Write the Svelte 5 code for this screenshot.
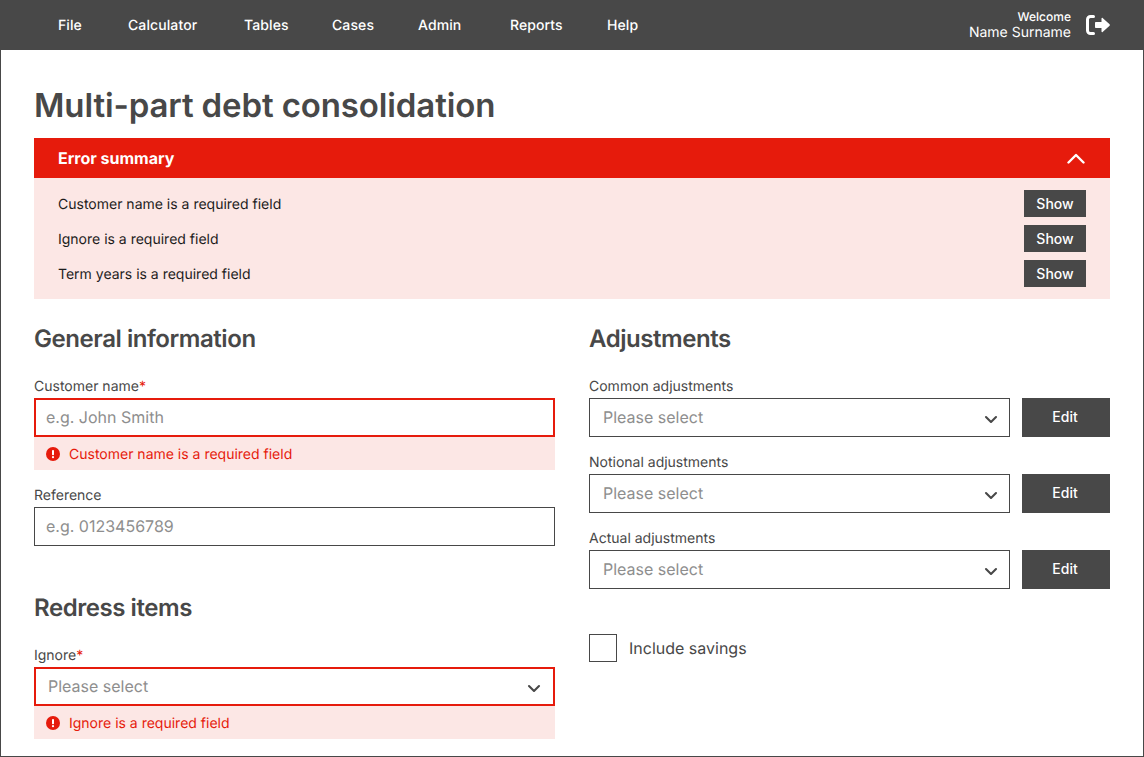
<script>
	const navItems = ["File", "Calculator", "Tables", "Cases", "Admin", "Reports", "Help"];
	const errors = [
		"Customer name is a required field",
		"Ignore is a required field",
		"Term years is a required field"
	];
	const adjustments = ["Common adjustments", "Notional adjustments", "Actual adjustments"];
</script>

{#snippet chevron()}
	<svg class="chevron" width="14" height="9" viewBox="0 0 14 9" fill="none">
		<path d="M2 2 7 7l5-5" stroke="#484848" stroke-width="2.1" stroke-linecap="round" stroke-linejoin="round" />
	</svg>
{/snippet}

{#snippet fieldError(text)}
	<div class="field-error">
		<svg width="14" height="14" viewBox="0 0 14 14">
			<circle cx="7" cy="7" r="7" fill="#e61b0c" />
			<rect x="6" y="3" width="2" height="5.2" rx="0.8" fill="#fff" />
			<circle cx="7" cy="10.2" r="1.1" fill="#fff" />
		</svg>
		<span>{text}</span>
	</div>
{/snippet}

<header class="topbar">
	<nav class="nav">
		{#each navItems as item}
			<span class="nav-item">{item}</span>
		{/each}
	</nav>
	<div class="user">
		<div class="user-text">
			<div class="welcome">Welcome</div>
			<div class="username">Name Surname</div>
		</div>
		<svg width="24" height="20" viewBox="0 0 24 20" fill="none">
			<path d="M7.500 1.500H4.500A3 3 0 0 0 1.500 4.500v11a3 3 0 0 0 3 3h3" stroke="#fff" stroke-width="3" stroke-linecap="round" />
			<path d="M9.800 7h5.700V3.400c0-.6.700-.9 1.100-.5l7 6.400c.4.400.4 1 0 1.400l-7 6.400c-.4.400-1.100.1-1.100-.5V13H9.800c-.5 0-.8-.4-.8-.8V7.800c0-.4.300-.8.800-.8z" fill="#fff" />
		</svg>
	</div>
</header>

<main class="page">
	<h1>Multi-part debt consolidation</h1>

	<section class="summary">
		<div class="summary-head">
			<span>Error summary</span>
			<svg width="18" height="11" viewBox="0 0 18 11" fill="none">
				<path d="M1.500 9.500 9 2l7.500 7.500" stroke="#fff" stroke-width="2.400" stroke-linecap="round" stroke-linejoin="round" />
			</svg>
		</div>
		<div class="summary-body">
			{#each errors as error}
				<div class="summary-row">
					<span class="row-text">{error}</span>
					<button class="show">Show</button>
				</div>
			{/each}
		</div>
	</section>

	<div class="columns">
		<div class="column">
			<h2>General information</h2>
			<div class="label first">Customer name<span class="req">*</span></div>
			<div class="control invalid input-like"><span class="placeholder">e.g. John Smith</span></div>
			{@render fieldError("Customer name is a required field")}
			<div class="label after-error">Reference</div>
			<div class="control input-like"><span class="placeholder">e.g. 0123456789</span></div>

			<h2 class="second">Redress items</h2>
			<div class="label first">Ignore<span class="req">*</span></div>
			<div class="control invalid select-like">
				<span class="placeholder">Please select</span>
				{@render chevron()}
			</div>
			{@render fieldError("Ignore is a required field")}
		</div>

		<div class="column">
			<h2>Adjustments</h2>
			<div class="adjustments">
				{#each adjustments as name}
					<div class="adjustment">
						<div class="label">{name}</div>
						<div class="adjustment-row">
							<div class="control select-like">
								<span class="placeholder">Please select</span>
								{@render chevron()}
							</div>
							<button class="edit">Edit</button>
						</div>
					</div>
				{/each}
			</div>
			<div class="checkbox-row">
				<span class="checkbox"></span>
				<span>Include savings</span>
			</div>
		</div>
	</div>
</main>

<style>
	:global(body) {
		margin: 0;
		background: #fff;
		font-family: Inter, "Liberation Sans", sans-serif;
		color: #484848;
		text-rendering: geometricPrecision;
	}
	.topbar {
		height: 50px;
		background: #484848;
		color: #fff;
		display: flex;
		align-items: center;
		justify-content: space-between;
		padding: 0 34px 0 58px;
	}
	.nav {
		display: grid;
		grid-template-columns: 70px 116px 88px 86px 92px 97px auto;
	}
	.nav-item {
		font-size: 14px;
		font-weight: 500;
		letter-spacing: 0.1px;
	}
	.user {
		display: flex;
		align-items: center;
		gap: 15px;
	}
	.user-text {
		text-align: right;
	}
	.welcome {
		font-size: 12px;
		font-weight: 500;
		line-height: 13px;
		margin-bottom: 2px;
	}
	.username {
		font-size: 14px;
		line-height: 15px;
	}
	.page {
		box-sizing: border-box;
		height: 707px;
		overflow: hidden;
		border: 1px solid #484848;
		border-top: 0;
		padding: 0 33px;
	}
	h1 {
		margin: 0;
		padding-top: 35px;
		font-size: 33px;
		line-height: 40px;
		font-weight: 600;
		letter-spacing: -0.12px;
		height: 53px;
	}
	.summary-head {
		height: 40px;
		background: #e61b0c;
		color: #fff;
		font-size: 16px;
		font-weight: 700;
		display: flex;
		align-items: center;
		justify-content: space-between;
		padding: 0 25px 0 24px;
	}
	.summary-body {
		background: #fce7e5;
		padding: 12px 24px;
		display: flex;
		flex-direction: column;
		gap: 8px;
	}
	.summary-row {
		display: flex;
		align-items: center;
		justify-content: space-between;
		height: 27px;
		font-size: 14px;
		color: #1c1c1c;
	}
	.row-text {
		padding-top: 2px;
	}
	button {
		border: 0;
		background: #484848;
		color: #fff;
		font-family: inherit;
		font-weight: 500;
		padding: 0;
	}
	.show {
		width: 62px;
		height: 27px;
		font-size: 14px;
	}
	.columns {
		display: grid;
		grid-template-columns: 521px 521px;
		gap: 34px;
	}
	h2 {
		margin: 0;
		padding-top: 25px;
		font-size: 24px;
		line-height: 29px;
		font-weight: 600;
		letter-spacing: -0.44px;
	}
	h2.second {
		padding-top: 47px;
	}
	.label {
		font-size: 14px;
		line-height: 19px;
		height: 17px;
		margin-bottom: 4px;
	}
	.label.first {
		margin-top: 24px;
	}
	.label.after-error {
		margin-top: 16px;
	}
	.req {
		color: #e61b0c;
	}
	.control {
		box-sizing: border-box;
		height: 39px;
		border: 1px solid #484848;
		display: flex;
		align-items: center;
		font-size: 16px;
	}
	.input-like {
		padding-left: 11px;
	}
	.control.invalid {
		border: 2px solid #e61b0c;
	}
	.input-like.invalid {
		padding-left: 10px;
	}
	.select-like {
		flex: 1;
		justify-content: space-between;
		padding: 0 11px 0 13px;
	}
	.select-like.invalid {
		padding: 0 12px 0 12px;
	}
	.placeholder {
		color: #8e8e8e;
		padding-bottom: 2px;
	}
	.chevron {
		display: block;
		margin-top: 3px;
	}
	.field-error {
		height: 33px;
		background: #fce7e5;
		color: #e61b0c;
		font-size: 14px;
		display: flex;
		align-items: center;
		gap: 9px;
		padding-left: 12px;
	}
	.field-error span {
		padding-top: 2px;
	}
	.field-error svg {
		flex: none;
	}
	.adjustments {
		display: flex;
		flex-direction: column;
		gap: 16px;
		margin-top: 24px;
	}
	.adjustment-row {
		display: flex;
		gap: 12px;
	}
	.edit {
		width: 88px;
		height: 39px;
		font-size: 14px;
		flex: none;
		padding: 0 2px 2px 0;
	}
	.checkbox-row {
		display: flex;
		align-items: center;
		gap: 12px;
		margin-top: 45px;
		font-size: 16px;
	}
	.checkbox {
		box-sizing: border-box;
		width: 28px;
		height: 28px;
		border: 1px solid #484848;
	}
</style>
